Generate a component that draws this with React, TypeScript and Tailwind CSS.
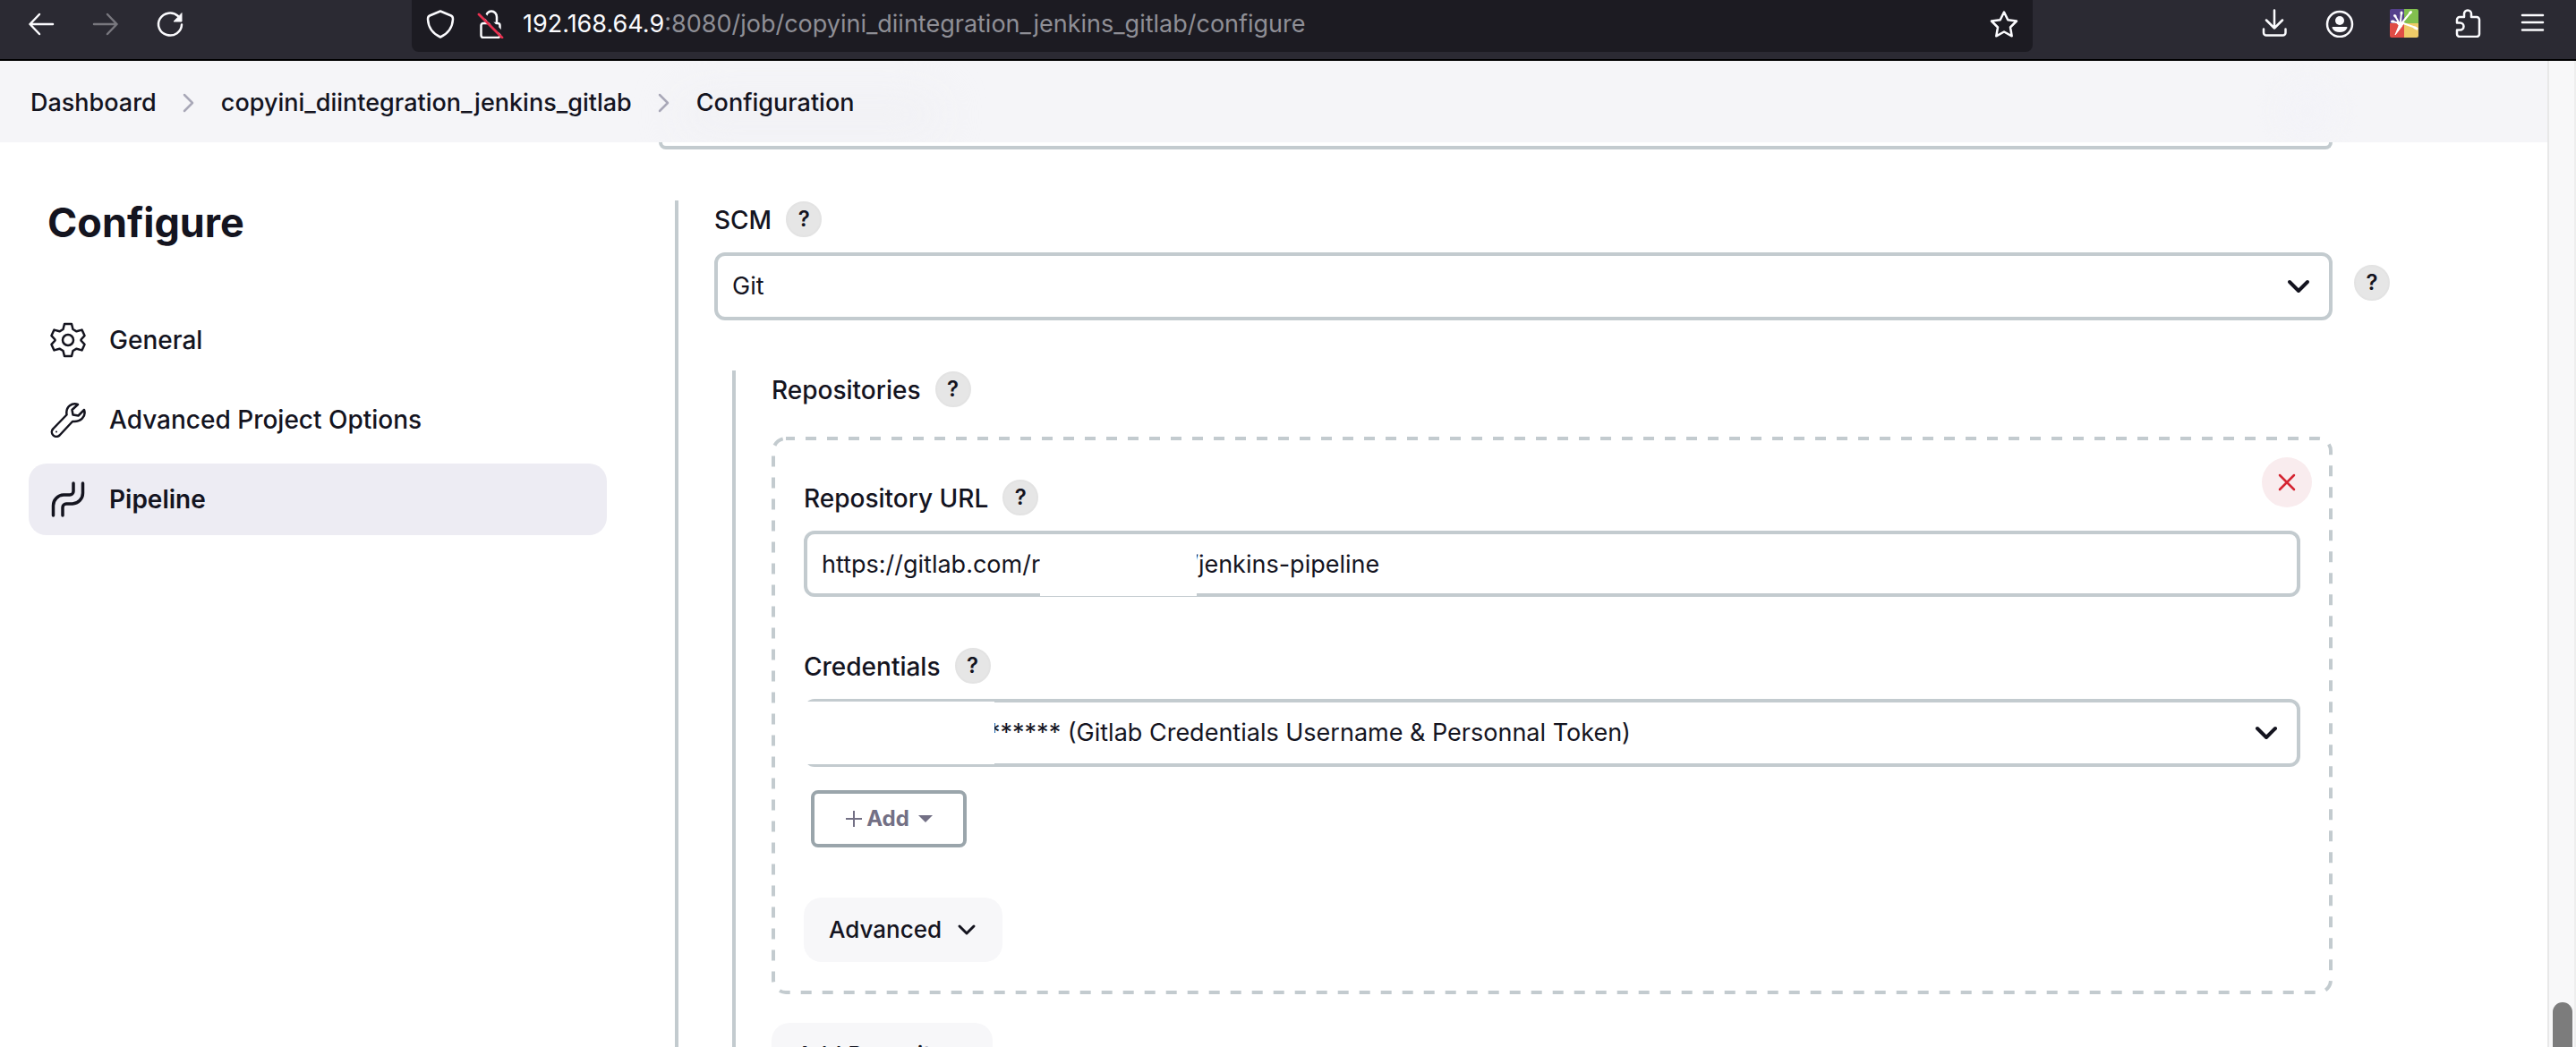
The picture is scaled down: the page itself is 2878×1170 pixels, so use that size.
import type { ReactNode } from "react";

const font = "font-[Inter,'Liberation_Sans',sans-serif]";

function Icon({ children, className, box = "0 0 32 32" }: { children: ReactNode; className?: string; box?: string }) {
  return (
    <svg
      viewBox={box}
      className={className ?? "size-8"}
      fill="none"
      stroke="currentColor"
      strokeWidth={2.5}
      strokeLinecap="round"
      strokeLinejoin="round"
      aria-hidden="true"
    >
      {children}
    </svg>
  );
}

function ToolButton({ label, children, className = "" }: { label: string; children: ReactNode; className?: string }) {
  return (
    <button type="button" aria-label={label} className={`size-8 shrink-0 ${className}`}>
      {children}
    </button>
  );
}

function BrowserBar() {
  return (
    <header className="flex h-[68px] shrink-0 items-start border-b-2 border-black bg-[#2b2a33] text-[#fbfbfe]">
      <div className="flex w-[460px] shrink-0 gap-10 pt-[11px] pl-[30px]">
        <ToolButton label="Back">
          <Icon>
            <path d="M29 16H3.500M14 5 3.500 16 14 27" />
          </Icon>
        </ToolButton>
        <ToolButton label="Forward" className="text-[#78777e]">
          <Icon>
            <path d="M3 16h25.500M18 5l10.500 11L18 27" />
          </Icon>
        </ToolButton>
        <ToolButton label="Reload">
          <Icon>
            <path d="M29 16.500a13 12.500 0 1 1-4-9.500" />
            <path d="M29 4v9h-8.500z" fill="currentColor" strokeWidth={1} />
          </Icon>
        </ToolButton>
      </div>
      <div className="flex h-[58px] flex-1 items-center rounded-b-lg bg-[#1c1b22] px-4 pb-1">
        <ToolButton label="Tracking protection">
          <Icon>
            <path d="M16 1.500 28 6.500c2 .8 2 2 2 4-.5 9.500-5.500 16-14 20C7.500 26.500 2.500 20 2 10.500c0-2 0-3.200 2-4z" />
          </Icon>
        </ToolButton>
        <ToolButton label="Connection not secure" className="ml-6">
          <Icon>
            <path d="M11 15V8a6 6.500 0 0 1 12 0v7M8 15h16a2.500 2.500 0 0 1 2.500 2.500v11A2.500 2.500 0 0 1 24 31H8a2.500 2.500 0 0 1-2.500-2.500v-11A2.500 2.500 0 0 1 8 15z" />
            <path d="M5 2 31 28" stroke="#1c1b22" strokeWidth={4} />
            <path d="M3 5 29 31" stroke="#e8304f" strokeWidth={2.8} />
          </Icon>
        </ToolButton>
        <span className="ml-5 flex-1 text-[27px] leading-8 text-[#8f8f96]">
          <span className="text-[#fbfbfe]">192.168.64.9</span>:8080/job/copyini_diintegration_jenkins_gitlab/configure
        </span>
        <ToolButton label="Bookmark">
          <Icon>
            <path d="M16 2.500 20.300 11.200 30 12.500 23 19.500 24.700 29.300 16 24.500 7.300 29.300 9 19.500 2 12.500 11.700 11.200z" />
          </Icon>
        </ToolButton>
      </div>
      <div className="flex w-[607px] shrink-0 justify-end gap-10 pt-[10px] pr-8">
        <ToolButton label="Downloads">
          <Icon>
            <path d="M15 1.500v20M6 12.500l9 9 9-9M3 22.500v4a3 3 0 0 0 3 3h18.500a3 3 0 0 0 3-3v-4" />
          </Icon>
        </ToolButton>
        <ToolButton label="Account">
          <Icon>
            <circle cx="16" cy="17" r="14" />
            <g fill="currentColor" stroke="none">
              <circle cx="16" cy="13" r="5" />
              <path d="M8.500 20h15c1 0 1.300.8.800 1.500-1.500 3-4.500 4.500-8.300 4.500s-6.800-1.500-8.300-4.500c-.5-.7-.2-1.500.8-1.500z" />
            </g>
          </Icon>
        </ToolButton>
        <ToolButton label="Extension">
          <svg viewBox="0 0 32 32" className="size-8 rounded-xs" aria-hidden="true">
            <path fill="#54408c" d="M0 0h16v16H0z" />
            <path fill="#82c04e" d="M16 0h16v16H16z" />
            <path fill="#e04c46" d="M0 16h16v16H0z" />
            <path fill="#efcb68" d="M16 16h16v16H16z" />
            <g stroke="#fff" strokeLinecap="round" fill="#fff">
              <path d="m10 15-4-7M12 14l1-10M3 14l8 2M14 15l9-11M15 16l14 5" strokeWidth="2" />
              <path d="m28 21 2 1M22.500 4.500l1-1M13 4v1M2.500 14H4M6 8l-.500-.500" strokeWidth="3" />
              <path d="M8 15h8l-3 5-7 9 4-10z" strokeWidth="1" />
            </g>
          </svg>
        </ToolButton>
        <ToolButton label="Extensions">
          <Icon>
            <path d="M11 9V5.500a4 4 0 0 1 8 0V9h6a3 3 0 0 1 3 3v16a3 3 0 0 1-3 3H6a3 3 0 0 1-3-3v-4.500h3.500a4 4 0 0 0 0-8H3V12a3 3 0 0 1 3-3z" />
          </Icon>
        </ToolButton>
        <ToolButton label="Menu">
          <Icon>
            <path d="M4 7h23M4 15h23M4 23.500h23" />
          </Icon>
        </ToolButton>
      </div>
    </header>
  );
}

function CrumbSeparator() {
  return (
    <Icon className="h-6 w-4 text-[#a9a8b8]" box="0 0 16 24">
      <path d="M3 3l9 9-9 9" />
    </Icon>
  );
}

function Breadcrumbs() {
  return (
    <nav
      aria-label="Breadcrumb"
      className="relative isolate flex h-[91px] shrink-0 items-center gap-7 overflow-hidden bg-[#f5f5f8] pt-0.5 pl-[34px] text-[27px] leading-8 font-medium"
    >
      <span className="absolute top-10 left-[760px] -z-10 h-10 w-[290px] rounded-full bg-[#f0f0f4] blur-xl" />
      <span className="absolute top-6 right-[236px] -z-10 size-16 rounded-full bg-[#f3f3f8] blur-md" />
      <a href="#dashboard">Dashboard</a>
      <CrumbSeparator />
      <a href="#job">copyini_diintegration_jenkins_gitlab</a>
      <CrumbSeparator />
      <a href="#configuration">Configuration</a>
    </nav>
  );
}

function Sidebar() {
  const row = "flex h-20 items-center gap-[26px] rounded-[20px] px-6 text-[28px] leading-8";
  return (
    <aside className="w-[736px] shrink-0 pt-[62px] pr-[58px] pl-8">
      <h1 className="pl-[21px] text-[45px] leading-[56px] font-bold">Configure</h1>
      <nav aria-label="Sections" className="mt-[63px] flex flex-col gap-[9px]">
        <a href="#general" className={`${row} font-medium`}>
          <Icon className="size-10" box="0 0 40 40">
            <path d="M16 2h8l1.500 6 4 2.300 6-1.700 3 6.500-4 4.400v1l4 4.400-3 6.500-6-1.700-4 2.300L24 38h-8l-1.500-6-4-2.300-6 1.700-3-6.500 4-4.400v-1l-4-4.400 3-6.500 6 1.700 4-2.300z" />
            <circle cx="20" cy="20" r="6" />
          </Icon>
          General
        </a>
        <a href="#advanced" className={`${row} font-medium`}>
          <Icon className="size-10" box="0 0 40 40">
            <path d="M31 3c-6-2.500-14 2-12.500 11.500L3.500 30a5 5 0 0 0 7 7.500L25 22c9 1 15.500-5.500 13-13l-6.500 6.500-6-1-1-5.500z" />
            <circle cx="7" cy="33.500" r="1" fill="currentColor" stroke="none" />
          </Icon>
          Advanced Project Options
        </a>
        <a href="#pipeline" aria-current="page" className={`${row} bg-[#edecf3] font-semibold`}>
          <Icon className="size-10" box="0 0 40 40">
            <path
              strokeWidth={3.5}
              d="M26 2v9a4 4 0 0 1-4 4h-7A12 12 0 0 0 3.500 27v11M36.500 2v11A12 12 0 0 1 25 25h-7a4 4 0 0 0-4 4v9"
            />
          </Icon>
          Pipeline
        </a>
      </nav>
    </aside>
  );
}

function Help({ label, className = "" }: { label: string; className?: string }) {
  return (
    <button
      type="button"
      aria-label={`Help for feature: ${label}`}
      className={`size-10 shrink-0 rounded-full border-2 border-[#e3e3e3] bg-[#e6e6e6] text-2xl leading-8 font-semibold ${className}`}
    >
      ?
    </button>
  );
}

function LabelRow({ id, label }: { id: string; label: string }) {
  return (
    <div className="flex h-10 items-center gap-4 text-[28px] leading-8 font-medium">
      <label htmlFor={id} className="pt-0.5">
        {label}
      </label>
      <Help label={label} />
    </div>
  );
}

function SelectBox({ id, text, className }: { id: string; text: string; className: string }) {
  return (
    <div className="relative min-w-0 flex-1">
      <select
        id={id}
        className={`block h-[76px] w-full appearance-none rounded-xl border-4 border-[#c3cbcf] bg-white pr-20 text-[27px] ${className}`}
      >
        <option>{text}</option>
      </select>
      <Icon className="pointer-events-none absolute top-[26px] right-6 h-6 w-7" box="0 0 28 24">
        <path strokeWidth={4} d="M4 7l10 10L24 7" />
      </Icon>
    </div>
  );
}

function DashedOutline() {
  return (
    <svg className="pointer-events-none absolute inset-0 size-full text-[#c3cbcf]" fill="none" aria-hidden="true">
      <rect
        x="2"
        y="2"
        rx="14"
        className="h-[calc(100%-4px)] w-[calc(100%-4px)]"
        stroke="currentColor"
        strokeWidth="4"
        strokeDasharray="12 12"
        strokeDashoffset="2"
      />
    </svg>
  );
}

function RepositoryCard() {
  return (
    <section className="relative mt-[33px] px-9 pt-12 pb-9">
      <DashedOutline />
      <button
        type="button"
        aria-label="Delete repository"
        className="absolute top-[23px] right-[23px] grid size-14 place-items-center rounded-full bg-[#f9ecee] text-[#d52532]"
      >
        <Icon className="size-6" box="0 0 24 24">
          <path d="M4 4l16 16M20 4 4 20" />
        </Icon>
      </button>
      <LabelRow id="repo-url" label="Repository URL" />
      <div className="relative mt-[17px]">
        <input
          id="repo-url"
          defaultValue={"https://gitlab.com/r" + "\u00a0".repeat(22) + "/jenkins-pipeline"}
          className="block h-[74px] w-full rounded-xl border-4 border-[#c3cbcf] bg-white px-4 text-[27px]"
        />
        <span className="absolute top-1 left-[264px] h-[69px] w-[175px] bg-white" />
      </div>
      <div className="mt-[57px]">
        <LabelRow id="credentials" label="Credentials" />
      </div>
      <div className="relative mt-[17px]">
        <SelectBox
          id="credentials"
          text="****** (Gitlab Credentials Username & Personnal Token)"
          className="pl-[202px]"
        />
        <span className="absolute top-[3px] left-0 h-[70px] w-[213px] bg-white" />
      </div>
      <button
        type="button"
        className="mt-[26px] ml-2 flex h-16 w-[174px] items-center justify-center gap-1 rounded-lg border-4 border-[#9aa5ab] text-2xl leading-8 font-bold text-[#737085]"
      >
        <Icon className="size-5" box="0 0 20 20">
          <path strokeWidth={2} strokeLinecap="butt" d="M10 1v18M1 10h18" />
        </Icon>
        Add
        <svg viewBox="0 0 16 8" className="ml-1.5 h-2 w-4" fill="currentColor" aria-hidden="true">
          <path d="M0 0h16L8 8z" />
        </svg>
      </button>
      <button
        type="button"
        className="mt-14 flex h-[72px] items-center gap-4 rounded-[20px] bg-[#f7f7f9] px-7 text-[26px] leading-8 font-medium"
      >
        Advanced
        <Icon className="h-4 w-6" box="0 0 24 16">
          <path strokeWidth={3} d="M4 4l8 8 8-8" />
        </Icon>
      </button>
    </section>
  );
}

function Scrollbar() {
  return (
    <div className="flex w-8 shrink-0 flex-col justify-end border-r-2 border-l-2 border-r-[#eeeeee] border-l-[#e8e8e8] bg-[#f8f8f9] pr-0.5 pl-1">
      <div className="h-[50px] w-[22px] rounded-t-full bg-[#7c7c7c]" />
    </div>
  );
}

export default function App() {
  return (
    <div className={`flex h-screen flex-col overflow-hidden bg-white text-[#14141f] ${font}`}>
      <BrowserBar />
      <div className="flex min-h-0 flex-1">
        <div className="flex min-w-0 flex-1 flex-col overflow-hidden">
          <Breadcrumbs />
          <div className="flex min-h-0 flex-1">
            <Sidebar />
            <main className="min-w-0 flex-1 pr-[176px]">
              <div className="mr-16 h-2 rounded-b-xl border-4 border-t-0 border-[#c3cbcf]" />
              <section className="mt-[57px] ml-[18px] border-l-4 border-[#c3cbcf] pt-px pl-10">
                <LabelRow id="scm" label="SCM" />
                <div className="mt-[17px] flex items-start gap-6">
                  <SelectBox id="scm" text="Git" className="pl-4" />
                  <Help label="Git" className="mt-[14px]" />
                </div>
                <section className="mt-14 mr-16 ml-5 border-l-4 border-[#c3cbcf] pt-px pl-10">
                  <div className="flex h-10 items-center gap-4 text-[28px] leading-8 font-medium">
                    <h2 className="pt-0.5">Repositories</h2>
                    <Help label="Repositories" />
                  </div>
                  <RepositoryCard />
                  <button
                    type="button"
                    className="mt-8 flex h-[72px] items-center rounded-[20px] bg-[#f7f7f9] px-7 text-[26px] leading-8 font-medium"
                  >
                    Add Repository
                  </button>
                </section>
              </section>
            </main>
          </div>
        </div>
        <Scrollbar />
      </div>
    </div>
  );
}
